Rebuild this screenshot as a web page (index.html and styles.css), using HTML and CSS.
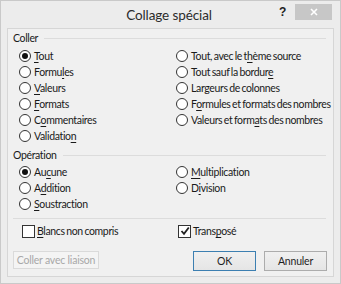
FILE: index.html
```html
<!DOCTYPE html>
<html lang="fr">
<head>
<meta charset="utf-8">
<title>Collage spécial</title>
<link rel="stylesheet" href="styles.css">
</head>
<body>
<div class="window">
  <div class="titlebar">
    <div class="title">Collage spécial</div>
    <div class="help">?</div>
    <div class="close">
      <svg width="10" height="10" viewBox="0 0 10 10"><path d="M2 2 L8 8 M8 2 L2 8" stroke="#fff" stroke-width="1.6"/></svg>
    </div>
  </div>
  <div class="client">
    <div class="group">
      <div class="legend"><span>Coller</span><i class="rule"></i></div>
      <div class="grid six">
        <div class="opt"><span class="radio on"></span><span><u>T</u>out</span></div>
        <div class="opt"><span class="radio"></span><span>Tout, avec le t<u>h</u>ème source</span></div>
        <div class="opt"><span class="radio"></span><span>Formu<u>l</u>es</span></div>
        <div class="opt"><span class="radio"></span><span>Tout sauf la bordur<u>e</u></span></div>
        <div class="opt"><span class="radio"></span><span><u>V</u>aleurs</span></div>
        <div class="opt"><span class="radio"></span><span>Largeurs de colonnes</span></div>
        <div class="opt"><span class="radio"></span><span><u>F</u>ormats</span></div>
        <div class="opt"><span class="radio"></span><span>F<u>o</u>rmules et formats des nombres</span></div>
        <div class="opt"><span class="radio"></span><span>C<u>o</u>mmentaires</span></div>
        <div class="opt"><span class="radio"></span><span>Valeurs et form<u>a</u>ts des nombres</span></div>
        <div class="opt"><span class="radio"></span><span>Validatio<u>n</u></span></div>
      </div>
    </div>
    <div class="group op">
      <div class="legend"><span>Opération</span><i class="rule"></i></div>
      <div class="grid">
        <div class="opt"><span class="radio on"></span><span>Au<u>c</u>une</span></div>
        <div class="opt"><span class="radio"></span><span><u>M</u>ultiplication</span></div>
        <div class="opt"><span class="radio"></span><span>A<u>d</u>dition</span></div>
        <div class="opt"><span class="radio"></span><span>D<u>i</u>vision</span></div>
        <div class="opt"><span class="radio"></span><span><u>S</u>oustraction</span></div>
      </div>
    </div>
    <div class="sep"></div>
    <div class="grid checks">
      <div class="opt"><span class="check"></span><span><u>B</u>lancs non compris</span></div>
      <div class="opt"><span class="check on"><svg width="10" height="10" viewBox="0 0 10 10"><path d="M1.5 5 L4 7.8 L8.8 1.5" fill="none" stroke="#222" stroke-width="1.8"/></svg></span><span>Trans<u>p</u>osé</span></div>
    </div>
    <div class="buttons">
      <button class="btn disabled">Coller avec liaison</button>
      <div class="right">
        <button class="btn default">OK</button>
        <button class="btn">Annuler</button>
      </div>
    </div>
  </div>
</div>
</body>
</html>
```

FILE: styles.css
```css
* { box-sizing: border-box; }
html, body { margin: 0; padding: 0; }
body {
  width: 341px;
  height: 284px;
  overflow: hidden;
  background: #ececec;
  font-family: Lato, "Liberation Sans", sans-serif;
  font-size: 10.5px;
  letter-spacing: -0.35px;
  word-spacing: -0.8px;
  color: #1a1a1a;
}
.window {
  width: 341px;
  height: 284px;
  background: #ececec;
  border: 1px solid #c9c9c9;
  display: flex;
  flex-direction: column;
  padding: 0 6px 6px 6px;
}
.titlebar {
  height: 27px;
  display: flex;
  align-items: flex-start;
}
.title {
  flex: 1;
  text-align: center;
  font-size: 13.5px;
  letter-spacing: -0.1px;
  word-spacing: 0;
  line-height: 28px;
  color: #2b2b2b;
  padding-left: 52px;
}
.help {
  font-weight: bold;
  font-size: 12px;
  margin-top: 4px;
  margin-right: 9px;
  color: #222;
  font-family: "Liberation Sans", sans-serif;
}
.close {
  width: 37px;
  height: 16px;
  margin-top: 3px;
  margin-right: 2px;
  background: #c7c7c7;
  display: flex;
  align-items: center;
  justify-content: center;
}
.client {
  flex: 1;
  background: #f0f0f0;
  border: 1px solid #d6d6d6;
  padding: 1px 6px 0 5px;
  display: flex;
  flex-direction: column;
}
.legend {
  display: flex;
  align-items: center;
  height: 16px;
}
.legend .rule {
  flex: 1;
  height: 1px;
  background: #dcdcdc;
  margin-left: 6px;
  margin-right: 1px;
}
.grid {
  display: grid;
  grid-template-columns: 157px 1fr;
  grid-auto-rows: 16px;
  padding-left: 6px;
}
.six { margin-top: 2px; }
.group.op { margin-top: 3px; }
.op .grid { margin-top: 1px; }
.opt {
  display: flex;
  align-items: center;
  gap: 3px;
  white-space: nowrap;
}
.radio {
  width: 12px;
  height: 12px;
  border-radius: 50%;
  border: 1px solid #333;
  background: #fff;
  display: flex;
  align-items: center;
  justify-content: center;
  flex: none;
}
.radio.on::after {
  content: "";
  width: 6px;
  height: 6px;
  border-radius: 50%;
  background: #111;
}
u { text-decoration: underline; text-underline-offset: 2px; }
.sep {
  height: 1px;
  background: #dcdcdc;
  margin: 6px 1px 0 0;
}
.checks { margin-top: 4px; padding-left: 9px; grid-template-columns: 156px 1fr; }
.checks .opt { gap: 2px; }
.check {
  width: 13px;
  height: 13px;
  border: 1px solid #333;
  background: #fff;
  display: flex;
  align-items: center;
  justify-content: center;
  flex: none;
}
.buttons {
  display: flex;
  justify-content: space-between;
  align-items: flex-start;
  margin-top: 12px;
}
.right { display: flex; gap: 8px; }
.btn {
  font-family: inherit;
  font-size: 10.5px;
  letter-spacing: -0.2px;
  height: 20px;
  padding: 0;
  border: 1px solid #acacac;
  background: linear-gradient(#f0f0f0, #e5e5e5);
  color: #1e1e1e;
  width: 63px;
  white-space: nowrap;
}
.btn.default { border-color: #3c7fb1; }
.btn.disabled {
  width: 86px;
  height: 18px;
  color: #a8a8a8;
  border-color: #dadada;
  background: #f4f4f4;
}
```
